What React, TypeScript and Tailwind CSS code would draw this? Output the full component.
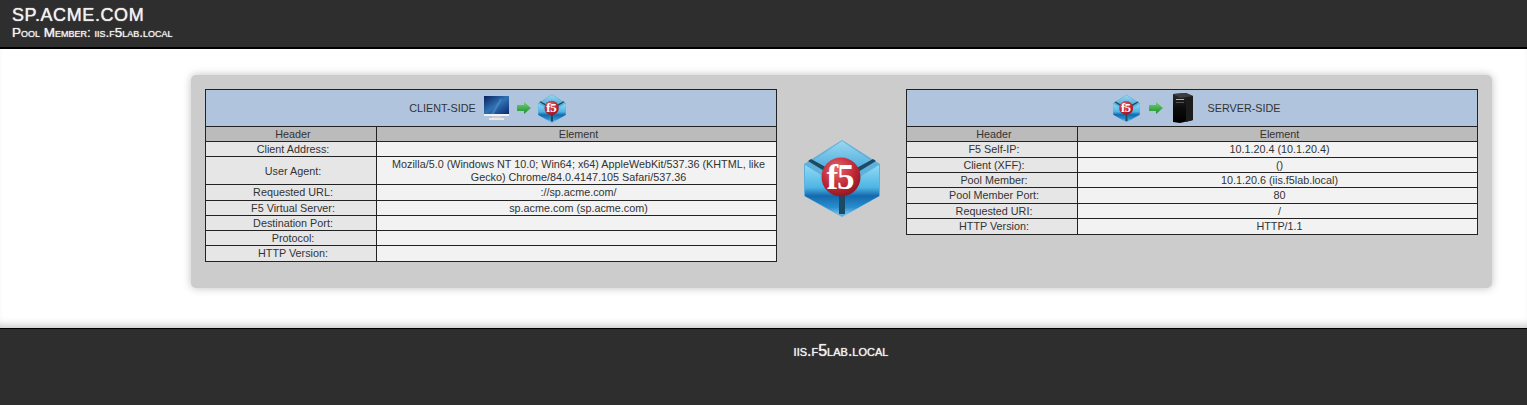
const clientRows: [string, string][] = [
  ['Client Address:', ''],
  ['User Agent:', 'Mozilla/5.0 (Windows NT 10.0; Win64; x64) AppleWebKit/537.36 (KHTML, like Gecko) Chrome/84.0.4147.105 Safari/537.36'],
  ['Requested URL:', '://sp.acme.com/'],
  ['F5 Virtual Server:', 'sp.acme.com (sp.acme.com)'],
  ['Destination Port:', ''],
  ['Protocol:', ''],
  ['HTTP Version:', ''],
];

const serverRows: [string, string][] = [
  ['F5 Self-IP:', '10.1.20.4 (10.1.20.4)'],
  ['Client (XFF):', '()'],
  ['Pool Member:', '10.1.20.6 (iis.f5lab.local)'],
  ['Pool Member Port:', '80'],
  ['Requested URI:', '/'],
  ['HTTP Version:', 'HTTP/1.1'],
];

// f5 cube logo, same drawing at both sizes
function F5Cube({ className }: { className: string }) {
  return (
    <svg viewBox="4 4 76 77" className={className}>
      <defs>
        <linearGradient id="cubeTop" x1="0" y1="0" x2="0" y2="1">
          <stop offset="0" stopColor="#9ad8f0" />
          <stop offset="0.5" stopColor="#62b8e2" />
          <stop offset="1" stopColor="#2f8fca" />
        </linearGradient>
        <linearGradient id="cubeSide" x1="0" y1="0" x2="0" y2="1">
          <stop offset="0" stopColor="#8edcf4" />
          <stop offset="0.45" stopColor="#4fb4e4" />
          <stop offset="0.62" stopColor="#1468ae" />
          <stop offset="0.85" stopColor="#2a8fd0" />
          <stop offset="1" stopColor="#7cc8ec" />
        </linearGradient>
        <radialGradient id="cubeBall" cx="0.4" cy="0.3" r="0.8">
          <stop offset="0" stopColor="#e2656c" />
          <stop offset="0.6" stopColor="#bd2432" />
          <stop offset="1" stopColor="#7a1420" />
        </radialGradient>
      </defs>
      <polygon points="42,4 80,28 80,60 42,81 4,60 4,28" fill="#5fb0da" />
      <polygon points="42,5 73,26 42,46 11,26" fill="url(#cubeTop)" />
      <polygon points="5,29 39,50 39,79 5,60" fill="url(#cubeSide)" />
      <polygon points="79,29 45,50 45,79 79,60" fill="url(#cubeSide)" />
      <polygon points="8,25 11,23 42,40 73,23 76,25 45,44 45,78 39,78 39,44" fill="#1d4a63" />
      <circle cx="41" cy="41" r="19.5" fill="url(#cubeBall)" />
      <text x="40" y="53" textAnchor="middle" fill="#fff" fontFamily="'Liberation Serif', serif" fontWeight="700" fontSize="35" letterSpacing="-1">f5</text>
    </svg>
  );
}

function GreenArrow() {
  return (
    <svg viewBox="0 0 14 12" className="w-[14px] h-[12px]">
      <defs>
        <linearGradient id="arrowFill" x1="0" y1="0" x2="0" y2="1">
          <stop offset="0" stopColor="#6fd070" />
          <stop offset="1" stopColor="#1c8f30" />
        </linearGradient>
      </defs>
      <polygon points="0,3 7,3 7,0 14,6 7,12 7,9 0,9" fill="url(#arrowFill)" />
    </svg>
  );
}

function Monitor() {
  return (
    <svg viewBox="0 0 25 25" className="w-[25px] h-[25px]">
      <defs>
        <linearGradient id="screenFill" x1="0" y1="0" x2="1" y2="1">
          <stop offset="0" stopColor="#0a1f5c" />
          <stop offset="0.5" stopColor="#2f73b4" />
          <stop offset="1" stopColor="#0b2a70" />
        </linearGradient>
      </defs>
      <rect x="0" y="0" width="25" height="18" fill="url(#screenFill)" />
      <polygon points="7,18 16,3 18,3 10,18" fill="#5b98cc" opacity="0.5" />
      <rect x="0" y="18" width="25" height="2" fill="#f0f2f4" />
      <rect x="8" y="20" width="9" height="2" fill="#c8ced4" />
      <rect x="5" y="22" width="15" height="2" fill="#e6e9ec" />
    </svg>
  );
}

function Tower() {
  return (
    <svg viewBox="0 0 21 30" className="w-[21px] h-[30px]">
      <defs>
        <linearGradient id="towerFace" x1="0" y1="0" x2="0" y2="1">
          <stop offset="0" stopColor="#2c2c2c" />
          <stop offset="0.5" stopColor="#0c0c0c" />
          <stop offset="1" stopColor="#000" />
        </linearGradient>
      </defs>
      <polygon points="1,1 14,0 21,3 21,27 8,30 1,29" fill="url(#towerFace)" />
      <polygon points="1,1 14,0 21,3 8,5" fill="#3d3d3d" />
      <polygon points="14,5 21,3 21,27 14,29" fill="#1c1c1c" />
      <rect x="4" y="6" width="8" height="1" fill="#b0b0b0" />
      <rect x="4" y="9" width="8" height="1" fill="#555" />
    </svg>
  );
}

function InfoTable({ title, rows }: { title: React.ReactNode; rows: [string, string][] }) {
  return (
    <table className="w-[572px] table-fixed border-collapse border border-[#222] text-[10.8px] leading-[12.4px] text-[#333] text-center">
      <colgroup>
        <col className="w-[171px]" />
        <col />
      </colgroup>
      <thead>
        <tr>
          <th colSpan={2} className="h-[37px] p-0 font-normal bg-[#b0c4de] border border-[#222]">
            {title}
          </th>
        </tr>
        <tr>
          <th className="h-[15.2px] py-0 pl-[4px] pr-0 font-normal bg-[#bbbbbb] border border-[#222]">Header</th>
          <th className="h-[15.2px] py-0 pl-[4px] pr-0 font-normal bg-[#bbbbbb] border border-[#222]">Element</th>
        </tr>
      </thead>
      <tbody>
        {rows.map(([label, value]) => (
          <tr key={label}>
            <td className="h-[15.2px] py-0 pl-[4px] pr-0 bg-[#e6e6e6] border border-[#222]">{label}</td>
            <td className="h-[15.2px] py-[1px] pl-[8px] pr-[4px] bg-[#f2f2f2] border border-[#222]">{value}</td>
          </tr>
        ))}
      </tbody>
    </table>
  );
}

export default function App() {
  return (
    <div className="min-h-[405px] bg-white font-['Liberation_Sans',Arial,sans-serif] flex flex-col">
      <header className="h-[49px] bg-[#2e2e2e] border-b-2 border-black pl-[12px] pt-[6px] text-[#f0f0f0] [text-shadow:0_0_1px_#fff]">
        <div className="text-[18px] leading-[19px] tracking-[0.6px]">SP.ACME.COM</div>
        <div className="text-[13.5px] leading-[15px] [font-variant:small-caps]">Pool Member: iis.f5lab.local</div>
      </header>

      <main className="h-[279px] pt-[26px] pl-[191px] pr-[35px] shadow-[inset_0_-8px_8px_-6px_rgba(0,0,0,0.25)]">
        <div className="h-[213px] bg-[#cccccc] rounded-[5px] p-[14px] flex items-start justify-between shadow-[0_0_8px_rgba(0,0,0,0.25)]">
          <InfoTable
            rows={clientRows}
            title={
              <div className="flex items-center justify-center pr-[7px]">
                <span>CLIENT-SIDE</span>
                <span className="ml-[8px] flex"><Monitor /></span>
                <span className="ml-[8px] flex"><GreenArrow /></span>
                <span className="ml-[7px] flex"><F5Cube className="w-[28px] h-[29px]" /></span>
              </div>
            }
          />
          <div className="self-center -mt-[7px] flex">
            <F5Cube className="w-[76px] h-[77px]" />
          </div>
          <InfoTable
            rows={serverRows}
            title={
              <div className="flex items-center justify-center pl-[10px]">
                <F5Cube className="w-[27px] h-[29px]" />
                <span className="ml-[9px] flex"><GreenArrow /></span>
                <span className="ml-[9px] flex"><Tower /></span>
                <span className="ml-[14px]">SERVER-SIDE</span>
              </div>
            }
          />
        </div>
      </main>

      <footer className="flex-1 bg-[#2e2e2e] border-t border-black pt-[13px] pl-[155px] text-center text-[16px] leading-[17px] text-[#f0f0f0] [font-variant:small-caps] [text-shadow:0_0_1px_#fff]">
        iis.f5lab.local
      </footer>
    </div>
  );
}
